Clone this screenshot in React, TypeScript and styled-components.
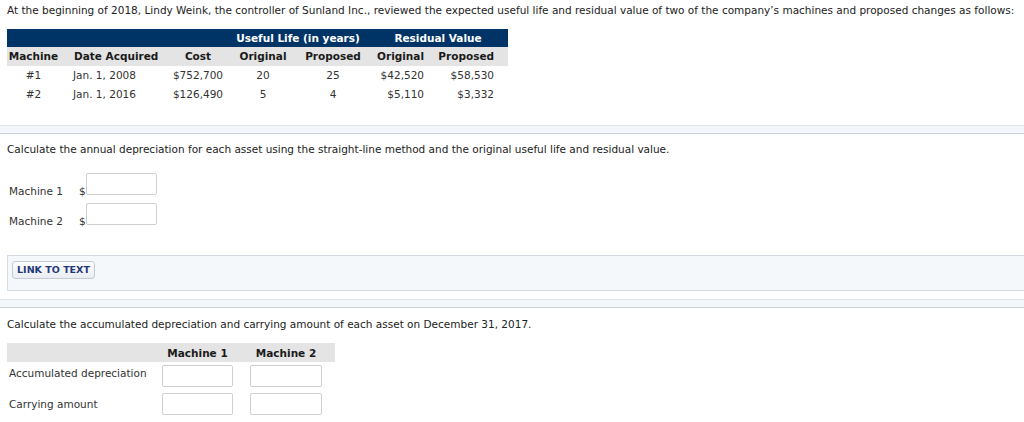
import React from "react";
import styled, { createGlobalStyle } from "styled-components";

const Global = createGlobalStyle`
  html, body { margin: 0; padding: 0; background: #fff; }
  body { font-family: "DejaVu Sans", Verdana, sans-serif; font-size: 10.5px; color: #222; overflow: hidden; }
`;

const Page = styled.div`
  width: 1024px;
  height: 422px;
  overflow: hidden;
`;

const Inset = styled.div`
  padding-left: 7px;
`;

const Para = styled.p<{ $top: number }>`
  margin: ${(p) => p.$top}px 0 0;
  line-height: 14px;
  white-space: nowrap;
`;

const DataTable = styled.table`
  margin-top: 12px;
  border-collapse: collapse;
  table-layout: fixed;
  width: 501px;
  color: #333;
  td, th { padding: 0; white-space: nowrap; }
`;

const DarkRow = styled.tr`
  background: #003366;
  color: #fff;
  th { font-weight: bold; text-align: center; height: 18px; line-height: 18px; }
`;

const HeadRow = styled.tr`
  background: #e4e4e4;
  color: #1a1a1a;
  th { font-weight: bold; height: 19px; line-height: 19px; }
`;

const BodyRow = styled.tr`
  td { height: 19px; line-height: 19px; }
`;

const Cell = styled.td<{ $align?: string; $pl?: number; $pr?: number }>`
  text-align: ${(p) => p.$align || "center"};
  padding-left: ${(p) => p.$pl || 0}px !important;
  padding-right: ${(p) => p.$pr || 0}px !important;
`;

const HCell = styled.th<{ $align?: string; $pl?: number; $pr?: number }>`
  text-align: ${(p) => p.$align || "center"};
  padding-left: ${(p) => p.$pl || 0}px !important;
  padding-right: ${(p) => p.$pr || 0}px !important;
`;

const Divider = styled.div<{ $top: number }>`
  margin-top: ${(p) => p.$top}px;
  height: 7px;
  background: #f3f6fa;
  border-top: 1px solid #dfe4ea;
  border-bottom: 1px solid #c9d1da;
`;

const AnswerList = styled.div`
  margin-top: 17px;
  display: flex;
  flex-direction: column;
  gap: 8px;
`;

const AnswerRow = styled.div`
  display: flex;
  align-items: flex-end;
`;

const RowLabel = styled.span`
  width: 70px;
  padding-left: 2px;
  color: #333;
  line-height: 14px;
  margin-bottom: -3px;
`;

const Dollar = styled.span`
  width: 7px;
  line-height: 14px;
  margin-bottom: -3px;
  color: #333;
`;

const Field = styled.div<{ $w: number }>`
  width: ${(p) => p.$w}px;
  height: 20px;
  border: 1px solid #cfcfcf;
  border-radius: 2px;
  background: #fff;
  box-sizing: content-box;
`;

const LinkPanel = styled.div`
  margin-top: 30px;
  width: 1030px;
  height: 36px;
  border: 1px solid #d3dae2;
  background: #f5f8fb;
  padding: 5px 0 0 4px;
  box-sizing: border-box;
`;

const LinkButton = styled.button`
  display: block;
  height: 18px;
  width: 83px;
  padding: 0 0 1px;
  border: 1px solid #c5cbd3;
  border-radius: 3px;
  background: linear-gradient(#fdfdfe, #e9edf2);
  font-family: "DejaVu Sans", Verdana, sans-serif;
  font-size: 9.5px;
  line-height: 15px;
  font-weight: bold;
  color: #1f3a78;
`;

const SumTable = styled.table`
  margin-top: 12px;
  border-collapse: collapse;
  table-layout: fixed;
  width: 328px;
  color: #333;
  td, th { padding: 0; white-space: nowrap; }
`;

const SumHead = styled.tr`
  background: #e4e4e4;
  height: 19px;
  color: #1a1a1a;
  th { font-weight: bold; }
`;

const SumRow = styled.tr<{ $h: number }>`
  height: ${(p) => p.$h}px;
  vertical-align: ${(p) => (p.$h > 25 ? "bottom" : "top")};
`;

const FieldWrap = styled.div<{ $pr?: number; $mt?: number }>`
  display: flex;
  justify-content: center;
  padding-right: ${(p) => p.$pr || 0}px;
  margin-top: ${(p) => p.$mt || 0}px;
`;

const SumLabel = styled.div`
  padding-left: 2px;
  line-height: 22px;
`;

export default function App() {
  return (
    <Page>
      <Global />
      <Inset>
        <Para $top={3}>
          At the beginning of 2018, Lindy Weink, the controller of Sunland Inc., reviewed the expected useful life and residual value of two of the company’s machines and proposed changes as follows:
        </Para>
        <DataTable>
          <colgroup>
            <col style={{ width: 53 }} />
            <col style={{ width: 108 }} />
            <col style={{ width: 60 }} />
            <col style={{ width: 70 }} />
            <col style={{ width: 70 }} />
            <col style={{ width: 62 }} />
            <col style={{ width: 78 }} />
          </colgroup>
          <thead>
            <DarkRow>
              <th colSpan={3} />
              <th colSpan={2}>Useful Life (in years)</th>
              <th colSpan={2}>Residual Value</th>
            </DarkRow>
            <HeadRow>
              <HCell>Machine</HCell>
              <HCell $align="left" $pl={14}>Date Acquired</HCell>
              <HCell>Cost</HCell>
              <HCell>Original</HCell>
              <HCell>Proposed</HCell>
              <HCell $align="right" $pr={6}>Original</HCell>
              <HCell $align="right" $pr={14}>Proposed</HCell>
            </HeadRow>
          </thead>
          <tbody>
            <BodyRow>
              <Cell>#1</Cell>
              <Cell $align="left" $pl={13}>Jan. 1, 2008</Cell>
              <Cell>$752,700</Cell>
              <Cell>20</Cell>
              <Cell>25</Cell>
              <Cell $align="right" $pr={6}>$42,520</Cell>
              <Cell $align="right" $pr={14}>$58,530</Cell>
            </BodyRow>
            <BodyRow>
              <Cell>#2</Cell>
              <Cell $align="left" $pl={13}>Jan. 1, 2016</Cell>
              <Cell>$126,490</Cell>
              <Cell>5</Cell>
              <Cell>4</Cell>
              <Cell $align="right" $pr={6}>$5,110</Cell>
              <Cell $align="right" $pr={14}>$3,332</Cell>
            </BodyRow>
          </tbody>
        </DataTable>
      </Inset>
      <Divider $top={21} />
      <Inset>
        <Para $top={8}>
          Calculate the annual depreciation for each asset using the straight-line method and the original useful life and residual value.
        </Para>
        <AnswerList>
          <AnswerRow>
            <RowLabel>Machine 1</RowLabel>
            <Dollar>$</Dollar>
            <Field $w={69} />
          </AnswerRow>
          <AnswerRow>
            <RowLabel>Machine 2</RowLabel>
            <Dollar>$</Dollar>
            <Field $w={69} />
          </AnswerRow>
        </AnswerList>
        <LinkPanel>
          <LinkButton>LINK TO TEXT</LinkButton>
        </LinkPanel>
      </Inset>
      <Divider $top={8} />
      <Inset>
        <Para $top={9}>
          Calculate the accumulated depreciation and carrying amount of each asset on December 31, 2017.
        </Para>
        <SumTable>
          <colgroup>
            <col style={{ width: 148 }} />
            <col style={{ width: 85 }} />
            <col style={{ width: 95 }} />
          </colgroup>
          <thead>
            <SumHead>
              <th />
              <th>Machine 1</th>
              <HCell $pr={3}>Machine 2</HCell>
            </SumHead>
          </thead>
          <tbody>
            <SumRow $h={25}>
              <td><SumLabel>Accumulated depreciation</SumLabel></td>
              <td><FieldWrap $mt={3}><Field $w={69} /></FieldWrap></td>
              <td><FieldWrap $pr={3} $mt={3}><Field $w={70} /></FieldWrap></td>
            </SumRow>
            <SumRow $h={28}>
              <td><SumLabel>Carrying amount</SumLabel></td>
              <td><FieldWrap><Field $w={69} /></FieldWrap></td>
              <td><FieldWrap $pr={3}><Field $w={70} /></FieldWrap></td>
            </SumRow>
          </tbody>
        </SumTable>
      </Inset>
    </Page>
  );
}
